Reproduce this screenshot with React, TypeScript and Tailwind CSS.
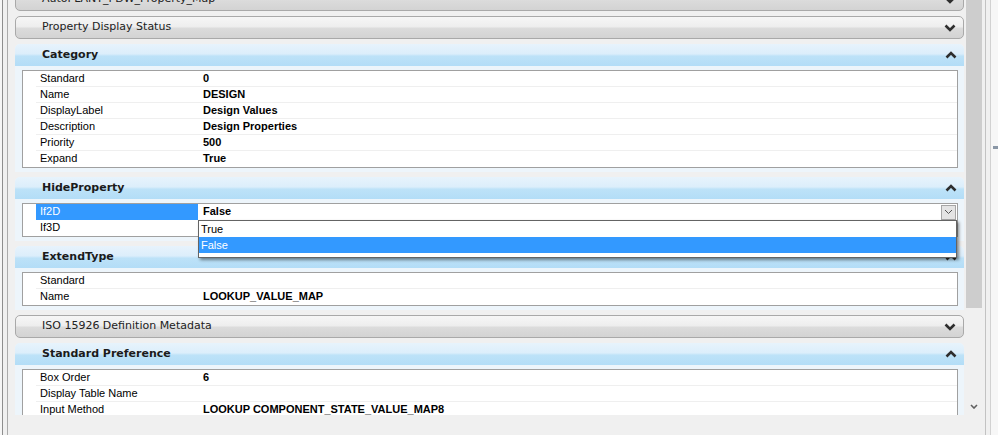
import React from 'react';

type Row = { label: string; value?: string };

const rowFont = "font-['Liberation_Sans',Arial,sans-serif]";
const headFont = "font-['DejaVu_Sans',Verdana,sans-serif]";

const Chevron = ({ up = false }: { up?: boolean }) => (
  <svg width="12" height="8" viewBox="0 0 12 8" className="shrink-0">
    <polyline
      points={up ? '1.5,6.5 6,2 10.5,6.5' : '1.5,1.5 6,6 10.5,1.5'}
      fill="none"
      stroke="#2e2e2e"
      strokeWidth="2.6"
    />
  </svg>
);

const GrayHeader = ({ title }: { title: string }) => (
  <div
    className={`flex h-[23px] shrink-0 items-center justify-between rounded-[5px] border border-[#a9a9a9] bg-[linear-gradient(to_bottom,#f6f6f6_0%,#eeeeee_45%,#dbdbdb_55%,#d3d3d3_100%)] pl-[26px] pr-[7px] text-[11px] text-[#222] ${headFont}`}
  >
    <span>{title}</span>
    <Chevron />
  </div>
);

const PropRow = ({ label, value, selected, last }: Row & { selected?: boolean; last?: boolean }) => (
  <div className={`flex h-4 pl-[13px] text-[11px] leading-[13px] text-black ${rowFont}`}>
    <div
      className={`flex w-[162px] shrink-0 items-center pb-px pl-[4px] ${
        selected ? 'bg-[#3399ff] text-white' : last ? '' : 'border-b border-[#efefef]'
      }`}
    >
      {label}
    </div>
    <div className={`flex flex-1 items-center pb-px pl-[5px] font-bold ${last ? '' : 'border-b border-[#efefef]'}`}>
      {value}
    </div>
  </div>
);

const Panel = ({ title, children }: { title: string; children: React.ReactNode }) => (
  <div className="shrink-0 rounded-t-[5px] bg-[#edf5fb] pb-[4px]">
    <div
      className={`flex h-[22px] items-center justify-between rounded-t-[5px] bg-[linear-gradient(to_bottom,#e7f3fc_0%,#dceefb_45%,#bde2f8_55%,#b3ddf7_100%)] pl-[27px] pr-[7px] text-[11px] font-bold text-[#1b1b1b] ${headFont}`}
    >
      <span>{title}</span>
      <Chevron up />
    </div>
    <div className="ml-[7px] mr-[6px] mt-[4px] border border-[#a0a0a0] bg-white">{children}</div>
  </div>
);

const RowList = ({ rows }: { rows: Row[] }) => (
  <>
    {rows.map((r, i) => (
      <PropRow key={r.label} {...r} last={i === rows.length - 1} />
    ))}
  </>
);

const category: Row[] = [
  { label: 'Standard', value: '0' },
  { label: 'Name', value: 'DESIGN' },
  { label: 'DisplayLabel', value: 'Design Values' },
  { label: 'Description', value: 'Design Properties' },
  { label: 'Priority', value: '500' },
  { label: 'Expand', value: 'True' },
];

const extendType: Row[] = [
  { label: 'Standard', value: '' },
  { label: 'Name', value: 'LOOKUP_VALUE_MAP' },
];

const preference: Row[] = [
  { label: 'Box Order', value: '6' },
  { label: 'Display Table Name', value: '' },
  { label: 'Input Method', value: 'LOOKUP COMPONENT_STATE_VALUE_MAP8' },
];

const ComboRow = () => (
  <div className={`relative z-10 flex h-4 pl-[13px] text-[11px] leading-[13px] text-black ${rowFont}`}>
    <div className="flex w-[162px] shrink-0 items-center bg-[#3399ff] pb-px pl-[4px] text-white">If2D</div>
    <div className="relative flex flex-1 items-center justify-between pl-[5px] font-bold">
      <span className="pb-px">False</span>
      <div className="mr-px flex h-[15px] w-[15px] items-center justify-center border border-[#a6a6a6] bg-[#e4e4e4]">
        <svg width="9" height="6" viewBox="0 0 9 6">
          <polyline points="1,1 4.5,4.5 8,1" fill="none" stroke="#555" strokeWidth="1" />
        </svg>
      </div>
      <div className="absolute left-0 right-0 top-full h-[38px] border border-[#646464] bg-white font-normal shadow-[2px_2px_3px_rgba(0,0,0,0.45)]">
        <div className="flex h-4 items-center pl-[2px]">True</div>
        <div className="flex h-4 items-center bg-[#3399ff] pl-[2px] text-white">False</div>
      </div>
    </div>
  </div>
);

export default function App() {
  return (
    <div className="flex h-[435px] w-[998px] overflow-hidden bg-[#f0f0f0]">
      {/* left window frame */}
      <div className="flex w-[8px] shrink-0">
        <div className="w-[2px] bg-[#f6f6f6]" />
        <div className="w-px bg-[#8e8e8e]" />
        <div className="w-[4px] bg-[#f0f0f0]" />
        <div className="w-px bg-[#ababab]" />
      </div>

      <div className="flex w-[977px] shrink-0 flex-col">
        <div className="flex h-[415px] shrink-0">
          <div className="w-[958px] shrink-0 overflow-hidden pl-[7px] pr-[2px]">
            <div className="-mt-[12px] flex flex-col gap-[5px]">
              <GrayHeader title="AutoPLANT_PDW_Property_Map" />
              <GrayHeader title="Property Display Status" />
              <Panel title="Category">
                <RowList rows={category} />
              </Panel>
              <Panel title="HideProperty">
                <ComboRow />
                <PropRow label="If3D" last />
              </Panel>
              <Panel title="ExtendType">
                <RowList rows={extendType} />
              </Panel>
              <GrayHeader title="ISO 15926 Definition Metadata" />
              <Panel title="Standard Preference">
                <RowList rows={preference} />
              </Panel>
            </div>
          </div>

          {/* vertical scrollbar */}
          <div className="flex w-[16px] shrink-0 flex-col bg-[#f0f0f0]">
            <div className="h-[308px] bg-[#cdcdcd]" />
            <div className="flex-1" />
            <div className="flex h-[17px] items-center justify-center">
              <svg width="8" height="5" viewBox="0 0 8 5">
                <polyline points="1,1 4,4 7,1" fill="none" stroke="#606060" strokeWidth="1.6" />
              </svg>
            </div>
          </div>
        </div>
        <div className="flex-1 bg-[#f0f0f0]" />
      </div>

      {/* right window frame */}
      <div className="flex w-[13px] shrink-0">
        <div className="w-px bg-[#c2c2c2]" />
        <div className="w-[4px] bg-[#f0f0f0]" />
        <div className="w-px bg-[#d2d2d2]" />
        <div className="flex flex-1 flex-col bg-[#f7f7f7]">
          <div className="ml-[2px] mt-[146px] h-[3px] bg-[#8a97a6]" />
        </div>
      </div>
    </div>
  );
}
